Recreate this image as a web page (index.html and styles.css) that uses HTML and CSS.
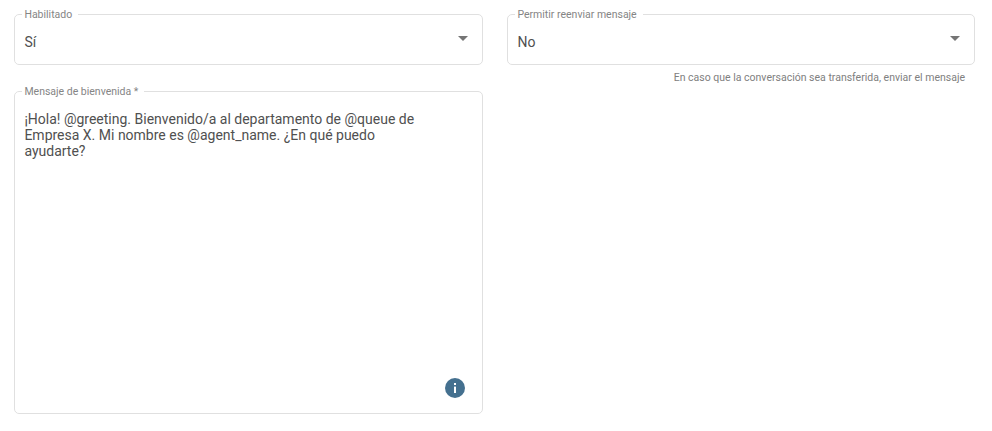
FILE: index.html
```html
<!DOCTYPE html>
<html lang="es">
<head>
<meta charset="utf-8">
<title>Mensaje de bienvenida</title>
<link rel="stylesheet" href="styles.css">
</head>
<body>
<main class="form">
  <div class="field">
    <fieldset class="box box-select">
      <legend class="label">Habilitado</legend>
      <span class="value">Sí</span>
      <span class="arrow"></span>
    </fieldset>
  </div>
  <div class="field">
    <fieldset class="box box-select">
      <legend class="label">Permitir reenviar mensaje</legend>
      <span class="value">No</span>
      <span class="arrow"></span>
    </fieldset>
    <p class="helper">En caso que la conversación sea transferida, enviar el mensaje</p>
  </div>
  <div class="field">
    <fieldset class="box box-text">
      <legend class="label">Mensaje de bienvenida *</legend>
      <p class="message">¡Hola! @greeting. Bienvenido/a al departamento de @queue de Empresa X. Mi nombre es @agent_name. ¿En qué puedo ayudarte?</p>
      <svg class="info" viewBox="0 0 20 20" width="20" height="20" aria-hidden="true">
        <circle cx="10" cy="10" r="10" fill="#44708f"/>
        <rect x="9" y="8.6" width="2" height="6.4" fill="#fff"/>
        <rect x="9" y="5" width="2" height="2" fill="#fff"/>
      </svg>
    </fieldset>
  </div>
</main>
</body>
</html>
```
FILE: styles.css
```css
* { box-sizing: border-box; }
html, body { margin: 0; background: #fff; }
body {
  font-family: Roboto, "Liberation Sans", sans-serif;
  color: #505050;
  overflow: hidden;
}
.form {
  display: grid;
  grid-template-columns: 469px 468px;
  column-gap: 24px;
  row-gap: 0;
  align-items: start;
  padding: 7px 0 0 14px;
}
.field { min-width: 0; }
.box {
  position: relative;
  margin: 0;
  padding: 0 9.4px;
  min-width: 0;
  border: 1px solid #e0e0e0;
  border-radius: 5px;
}
.label {
  margin-left: -2px;
  padding: 2px 6px 0 2px;
  font-size: 10.5px;
  line-height: 12px;
  color: #858585;
  white-space: nowrap;
}
.box-select {
  height: 58px;
  display: flex;
  align-items: center;
}
.value {
  font-size: 14px;
  line-height: 18px;
  margin-top: -2px;
}
.arrow {
  position: absolute;
  right: 14px;
  top: 15px;
  width: 0;
  height: 0;
  border-left: 5px solid transparent;
  border-right: 5px solid transparent;
  border-top: 5px solid #757575;
}
.helper {
  margin: 6px 10px 0 0;
  font-size: 10.5px;
  line-height: 13px;
  color: #808080;
  text-align: right;
}
.box-text {
  height: 330px;
}
.message {
  margin: 13px 0 0;
  font-size: 14px;
  line-height: 16px;
  width: 410px;
}
.info {
  position: absolute;
  right: 17px;
  bottom: 15px;
}
```
